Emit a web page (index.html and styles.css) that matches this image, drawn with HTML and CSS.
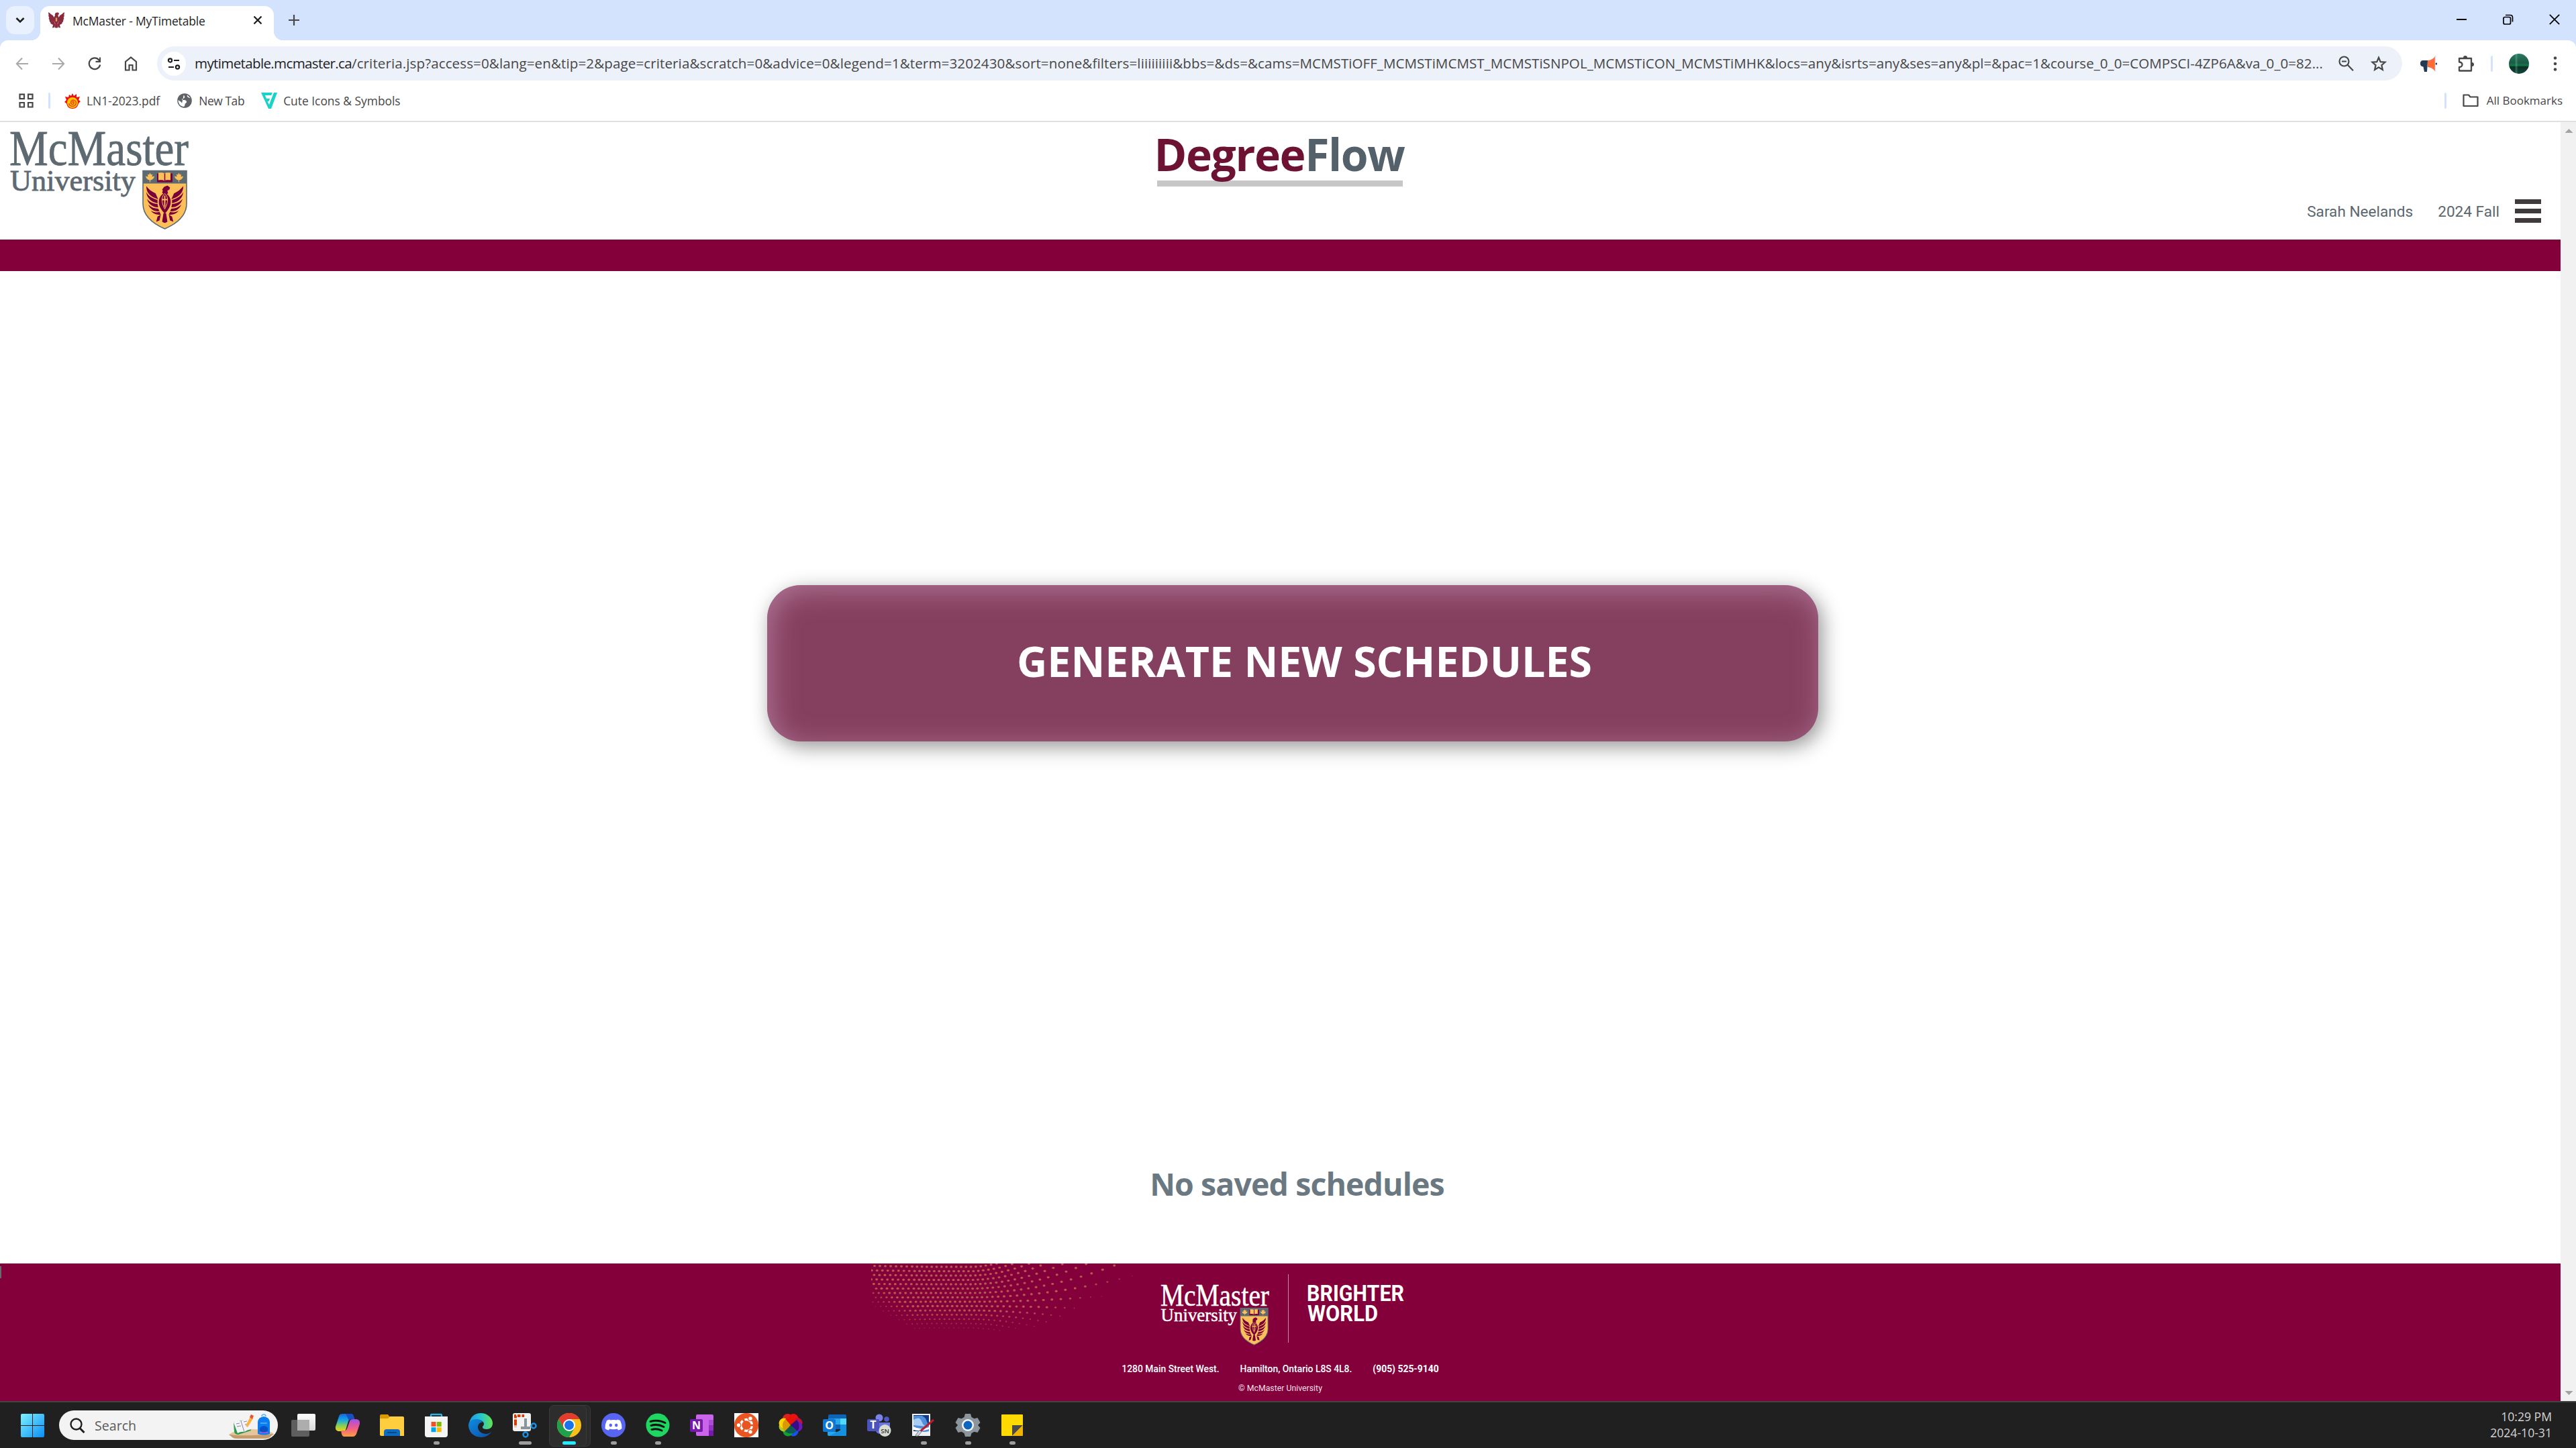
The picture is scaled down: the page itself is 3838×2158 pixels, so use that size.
FILE: index.html
```
<!DOCTYPE html>
<html lang="en">
<head>
<meta charset="utf-8">
<title>McMaster - MyTimetable</title>
<link rel="stylesheet" href="styles.css">
</head>
<body>
<svg class="defs" aria-hidden="true">
  <symbol id="eagle" viewBox="0 0 60 58">
    <path d="M26 7l3-4 5-2 4 3-1 3-3 2 1 4-5 2-4-3 1-3z"/>
    <path d="M30 12c6 3 9 8 9 14 0 7-4 12-9 18-5-6-9-11-9-18 0-6 3-11 9-14z"/>
    <path d="M2 2c4 5 8 8 14 11l4 9-7-3C7 16 2 11 2 2zM2 11c3 6 8 9 17 12l0 5C10 26 3 21 2 11zM3 21c4 5 9 7 16 8l1 5C12 34 5 29 3 21zM5 30c4 4 9 6 15 6l2 4C14 41 8 37 5 30zM9 39c4 3 9 3 13 2l2 4C18 46 12 44 9 39z"/>
    <path d="M58 2c-4 5-8 8-14 11l-4 9 7-3C53 16 58 11 58 2zM58 11c-3 6-8 9-17 12l0 5C50 26 57 21 58 11zM57 21c-4 5-9 7-16 8l-1 5C48 34 55 29 57 21zM55 30c-4 4-9 6-15 6l-2 4C46 41 52 37 55 30zM51 39c-4 3-9 3-13 2l-2 4C42 46 48 44 51 39z"/>
    <path d="M28 43h4l2 13-4 2-4-2zM24 45l-2 9-5 2 2-8zM36 45l2 9 5 2-2-8z"/>
  </symbol>
  <symbol id="shield" viewBox="0 0 67 88">
    <path d="M1 1h65v49c0 17-13 29-32.500 37.500C14 79 1 67 1 50z" fill="#fdbf57" stroke="#5e6a71" stroke-width="1.600"/>
    <path d="M1 1h65v19H1z" fill="#5e6a71"/>
    <path d="M11.500 4l1.500 3 2-1-.5 4 3.500-1-1 3-3 2.500-2 .5v3h-1v-3l-2-.5-3-2.500-1-3 3.500 1L8 6l2 1zM54.500 4l1.500 3 2-1-.5 4 3.500-1-1 3-3 2.500-2 .5v3h-1v-3l-2-.5-3-2.500-1-3 3.500 1L51 6l2 1z" fill="#fdbf57"/>
    <path d="M22 5h23v13H22z" fill="#7a003c"/><path d="M24 4c4-.5 7-.5 9 1 2-1.500 5-1.500 9-1v11c-4-.5-7-.5-9 1-2-1.500-5-1.500-9-1z" fill="#fdbf57"/><path d="M33.500 5v11" stroke="#7a003c" stroke-width="1.500"/>
    <use href="#eagle" x="4" y="22" width="59" height="57" fill="#7a003c"/>
    <path d="M33.500 38v17M29 44h9" stroke="#fdbf57" stroke-width="1.800"/><path d="M33.500 35c5 4 6 12 0 23-6-11-5-19 0-23z" fill="none" stroke="#fdbf57" stroke-width="1"/>
  </symbol>
</svg>

<div class="tabstrip">
  <div class="tab-search"><svg width="14" height="10" viewBox="0 0 14 10"><path d="M1.500 2L7 7.500 12.500 2" fill="none" stroke="#1f1f1f" stroke-width="2.600"/></svg></div>
  <div class="tab">
    <svg class="favicon" viewBox="0 0 60 58" fill="#8a2a3c"><use href="#eagle" stroke="#8a2a3c" stroke-width="3.500"/><path d="M27 20h6v14h-6z" fill="#d9a05a"/></svg>
    <span class="tab-title">McMaster - MyTimetable</span>
    <svg width="14" height="14" viewBox="0 0 14 14"><path d="M1.500 1.500l11 11M12.500 1.500l-11 11" stroke="#1f1f1f" stroke-width="2.300"/></svg>
  </div>
  <svg class="new-tab" width="16" height="16" viewBox="0 0 16 16"><path d="M8 0v16M0 8h16" stroke="#474747" stroke-width="2.200"/></svg>
  <div class="window-controls">
    <svg width="16" height="16" viewBox="0 0 16 16"><path d="M0 8h15" stroke="#000" stroke-width="2"/></svg>
    <svg width="16" height="16" viewBox="0 0 16 16" fill="none" stroke="#000" stroke-width="1.700"><rect x="1" y="4.500" width="10.500" height="10.500" rx="2"/><path d="M4 1.500h7c2 0 3.500 1.500 3.500 3.500v6.500"/></svg>
    <svg width="16" height="16" viewBox="0 0 16 16"><path d="M.8.8l14.400 14.400M15.200.8L.8 15.200" stroke="#000" stroke-width="1.700"/></svg>
  </div>
</div>

<div class="toolbar">
  <div class="nav"><svg width="20" height="20" viewBox="0 0 20 20"><path d="M19 10H2M10 1.500L1.800 10l8.200 8.500" fill="none" stroke="#a9a9a9" stroke-width="2"/></svg></div>
  <div class="nav"><svg width="20" height="20" viewBox="0 0 20 20"><path d="M1 10h17M10 1.500l8.200 8.500-8.200 8.500" fill="none" stroke="#a9a9a9" stroke-width="2"/></svg></div>
  <div class="nav"><svg width="20" height="20" viewBox="0 0 20 20"><path d="M18.200 11.500A8.300 8.300 0 1 1 16.500 4.500L18 6.500" fill="none" stroke="#474747" stroke-width="2.200"/><path d="M19 .5v7.500h-7.500V5.800H17V.5z" fill="#474747"/></svg></div>
  <div class="nav"><svg width="20" height="22" viewBox="0 0 20 22"><path d="M2 20.500V8l8-6.500L18 8v12.500h-5.500V13h-5v7.500z" fill="none" stroke="#474747" stroke-width="2.200"/></svg></div>
  <div class="omnibox">
    <span class="site-chip"><svg width="20" height="18" viewBox="0 0 20 18" fill="none" stroke="#1f1f1f" stroke-width="2.200"><circle cx="4.500" cy="4" r="2.600"/><path d="M10 4h8M2 14h8"/><circle cx="15.500" cy="14" r="2.600"/></svg></span>
    <span class="url"><span class="host">mytimetable.mcmaster.ca</span><span class="path">/criteria.jsp?access=0&amp;lang=en&amp;tip=2&amp;page=criteria&amp;scratch=0&amp;advice=0&amp;legend=1&amp;term=3202430&amp;sort=none&amp;filters=liiiiiiiii&amp;bbs=&amp;ds=&amp;cams=</span><span class="query">MCMSTiOFF_MCMSTiMCMST_MCMSTiSNPOL_MCMSTiCON_MCMSTiMHK&amp;locs=any&amp;isrts=any&amp;ses=any&amp;pl=&amp;pac=1&amp;course_0_0=COMPSCI-4ZP6A&amp;va_0_0=82...</span></span>
    <svg width="26" height="26" viewBox="0 0 26 26" fill="none" stroke="#474747" stroke-width="2.200"><circle cx="9.500" cy="9.500" r="7"/><path d="M6 9.500h7M14.800 14.800l8.200 8.500"/></svg>
    <svg width="28" height="28" viewBox="0 0 28 28"><path d="M14 4.800l2.700 6.300 6.800.6-5.100 4.500 1.500 6.700-5.900-3.500-5.900 3.500 1.500-6.700-5.100-4.500 6.800-.6z" fill="none" stroke="#474747" stroke-width="2.200"/></svg>
  </div>
  <div class="ext"><svg width="26" height="26" viewBox="0 0 26 26"><path d="M12 8H6C2 8 1 10 1 13s2 4 4.500 4.500L7 25h4l.5-7z" fill="#243b56"/><path d="M12 8c4 0 8-2 11-6v22c-3-4-7-6-11-6z" fill="#ff6b35"/><path d="M23.500 1v24" stroke="#cfe6fb" stroke-width="1.500"/><circle cx="25" cy="13" r="1.500" fill="#243b56"/></svg></div>
  <div class="ext"><svg width="26" height="26" viewBox="0 0 26 26"><path d="M3 5h18v18.500H3v-5.500c6 0 6-7.500 0-7.500z" fill="none" stroke="#474747" stroke-width="2.300" stroke-linejoin="round"/><path d="M9 4a3 3 0 0 1 6 0zM22 11a3 3 0 0 1 0 6z" fill="#474747"/></svg></div>
  <i class="bar-divider toolbar-divider"></i>
  <i class="avatar"></i>
  <div class="kebab"><svg width="6" height="22" viewBox="0 0 6 22" fill="#474747"><circle cx="3" cy="2.500" r="2.300"/><circle cx="3" cy="11" r="2.300"/><circle cx="3" cy="19.500" r="2.300"/></svg></div>
</div>

<div class="bookmarks">
  <svg width="24" height="24" viewBox="0 0 24 24" fill="none" stroke="#474747" stroke-width="2.200"><path d="M2.500 2.600h6.500v6.500H2.500zM15 2.600h6.500v6.500H15zM2.500 15H9v6.500H2.500zM15 15h6.500v6.500H15z"/></svg>
  <i class="bar-divider"></i>
  <span class="bookmark"><svg width="24" height="24" viewBox="0 0 24 24"><path d="M12 1l2 4 4-3v5l5-1-2 5 3 2-3 3c-1 5-4 8-9 8s-8-3-9-8l-3-2 3-3-2-5 5 1 1-4 3 2z" fill="#f00d0d"/><circle cx="12" cy="15" r="8" fill="#ffc800"/><path d="M12 15c-1-2 3-2 2 1s-6 1-4-3 9-1 7 4-10 4-10-1" fill="none" stroke="#f2480d" stroke-width="1.600"/></svg>LN1-2023.pdf</span>
  <span class="bookmark tight"><svg width="24" height="24" viewBox="0 0 24 24"><circle cx="12" cy="12" r="10.800" fill="#5f6368"/><path d="M11 2.500c-1 2 2 2.500 1 5-1 2-4 1-4 3.500 3 0 7-.5 7 3 0 2-2.500 1.500-2.500 4 0 1-1 3-2 3C5 20 2.500 16 2.500 11 5 13 8 14 8 16M16 3.500c-1 3 2 4 5 5" fill="#fff"/></svg>New Tab</span>
  <span class="bookmark"><svg width="24" height="24" viewBox="0 0 24 24" fill="#17d3c8"><path d="M0 0h17l-2 4H6l2 5h5l-1.500 4H9.500L12 18l7-18h5l-9 24h-4z"/></svg>Cute Icons &amp; Symbols</span>
  <span class="bookmark-right"><i class="bar-divider"></i><svg width="24" height="20" viewBox="0 0 24 20"><path d="M1.500 1.500h7.500l2.500 3h11v13.500h-21z" fill="none" stroke="#474747" stroke-width="2.200" stroke-linejoin="round"/></svg><span>All Bookmarks</span></span>
</div>

<div class="viewport">
  <div class="page">
    <header class="site-header">
      <svg class="logo site-logo" viewBox="0 0 267 148">
        <text x="0" y="51" font-size="75" textLength="267" lengthAdjust="spacingAndGlyphs">McMaster</text>
        <text x="1" y="89" font-size="45" textLength="187" lengthAdjust="spacingAndGlyphs">University</text>
        <use href="#shield" x="198" y="58" width="67" height="89"/>
      </svg>
      <h1 class="product"><span class="degree">Degree</span><span class="flow">Flow</span></h1>
      <nav class="account"><span>Sarah Neelands</span><span>2024 Fall</span><i class="burger"></i></nav>
    </header>
    <div class="band"></div>
    <main class="content">
      <button class="generate">GENERATE NEW SCHEDULES</button>
      <p class="empty">No saved schedules</p>
    </main>
    <footer class="site-footer">
      <svg class="dots" id="dots" viewBox="0 0 400 110"></svg>
      <i class="edge-mark"></i>
      <div class="footer-brand">
        <svg class="logo footer-logo" viewBox="0 0 267 148">
          <text x="0" y="51" font-size="75" textLength="267" lengthAdjust="spacingAndGlyphs">McMaster</text>
          <text x="1" y="89" font-size="45" textLength="187" lengthAdjust="spacingAndGlyphs">University</text>
          <use href="#shield" x="195" y="55" width="70" height="93"/>
        </svg>
        <i class="footer-rule"></i>
        <svg class="brighter" viewBox="0 0 144 56"><g font-family="Roboto, sans-serif" font-weight="700" font-size="32.500" fill="#fff"><text x="-1" y="24.500" textLength="145" lengthAdjust="spacingAndGlyphs">BRIGHTER</text><text x="0" y="54.500" textLength="105" lengthAdjust="spacingAndGlyphs">WORLD</text></g></svg>
      </div>
      <div class="address"><span>1280 Main Street West.</span><span>Hamilton, Ontario L8S 4L8.</span><b>(905) 525-9140</b></div>
      <div class="copyright">© McMaster University</div>
    </footer>
  </div>
  <div class="scrollbar"><i class="arrow up"></i><i class="arrow down"></i></div>
</div>

<div class="taskbar">
  <svg class="start" width="35" height="35" viewBox="0 0 35 35"><defs><linearGradient id="win" x2="1" y2="1"><stop stop-color="#7ff2ff"/><stop offset="1" stop-color="#0a8df5"/></linearGradient></defs><path d="M2 0h15v17H0V2q0-2 2-2zM18 0h15q2 0 2 2v15H18zM0 18h17v17H2q-2 0-2-2zM18 18h17v15q0 2-2 2H18z" fill="url(#win)"/></svg>
  <div class="search">
    <svg width="23" height="23" viewBox="0 0 23 23"><circle cx="9.500" cy="9.500" r="8" fill="none" stroke="#1f1f1f" stroke-width="2.400"/><path d="M15 15.500l6.500 6.500" stroke="#1f1f1f" stroke-width="3"/></svg>
    <span>Search</span>
    <svg class="school" width="70" height="44" viewBox="0 0 70 44"><path d="M1 36q12-9 36-8 22 0 31 7l-5 4q-2 3-10 3H14q-7 0-9-3z" fill="#e6c49c"/><path d="M1 36q20 3 67-1l-5 4q-2 3-10 3H14q-7 0-9-3z" fill="#c49b6c"/><path d="M8 18l20-5 6 17-19 6q-5 0-6-4z" fill="#2e9b4d"/><path d="M8 18q5-3 11-2 4-3 9-4l6 16q-6 1-10 4-5-1-10 2z" fill="#f5f3fa"/><path d="M19 16l5 16M12 20l5-1M13 24l6-1M23 17l5-1M25 21l5-1" stroke="#8a8796"/><path d="M26 23l7-14 4 3-8 13z" fill="#fbb13c"/><path d="M32 10l2-4 4 2-2 5z" fill="#e8503a"/><path d="M44 35V17q1-7 9-8 8 1 9 8v18q-9 3-18 0z" fill="#0b7dee"/><path d="M47 33v-7q6-6 12 0v7q-6 2-12 0z" fill="#0553c7"/><path d="M47 31q6 3 12 0v3H47z" fill="#a05ad9"/><path d="M50 9q0-3 3-3t3 3M48 19h10" fill="none" stroke="#55b7ff" stroke-width="1.500"/></svg>
  </div>
  <div class="apps">
    <div class="app"><svg viewBox="0 0 36 36"><defs><linearGradient id="tv" x2="0" y2="1"><stop stop-color="#fff"/><stop offset="1" stop-color="#d9d9d9"/></linearGradient></defs><rect x="9" y="1" width="27" height="25" rx="2" fill="url(#tv)"/><rect x="0" y="10" width="27" height="25" rx="2" fill="#6a6a6a" opacity=".85"/><rect x="9" y="10" width="18" height="16" fill="#adadad"/></svg></div>
    <div class="app"><svg viewBox="0 0 36 36"><defs><linearGradient id="c1" x2="0" y2="1"><stop stop-color="#1b63d8"/><stop offset=".35" stop-color="#13a6e8"/><stop offset=".7" stop-color="#8bd052"/><stop offset="1" stop-color="#f5d315"/></linearGradient><linearGradient id="c2" x2="0" y2="1"><stop stop-color="#a34ee8"/><stop offset=".5" stop-color="#ef5b8c"/><stop offset="1" stop-color="#ff9d3c"/></linearGradient></defs><path d="M10 1h13q3 0 4 4l1 4h-5q-3 0-4 3l-4 13q-1 2-4 2H4q-5-1-4-7L5 5q1-4 5-4z" fill="url(#c1)"/><path d="M26 9h5q6 1 5 7l-5 15q-2 4-5 4H13q-3 0-4-4l-1-5h5q3 0 4-3l4-11q1-3 5-3z" fill="url(#c2)"/><path d="M15 1h8q3 0 4 4l1 4h-5q-2 0-3 2z" fill="#164fc4"/></svg></div>
    <div class="app"><svg viewBox="0 0 36 36"><path d="M0 4q0-2 2-2h10l3 4v5H0z" fill="#dd9a00"/><path d="M0 8h12l3-3h19q2 0 2 2v27H2q-2 0-2-2z" fill="#ffce3e"/><path d="M6 34V28q0-4 4-4h16q4 0 4 4v6z" fill="#0f6bbf"/><path d="M11 29h14" stroke="#074887" stroke-width="2"/></svg></div>
    <div class="app dot"><svg viewBox="0 0 36 36"><path d="M10 7V3q0-1 1-1h14q1 0 1 1v4" fill="none" stroke="#29b1ea" stroke-width="2.400"/><path d="M1 5h34v27q0 4-4 4H5q-4 0-4-4z" fill="#f4f4f4"/><path d="M10.500 13h7v7h-7z" fill="#f25022"/><path d="M18.700 13h7v7h-7z" fill="#7fba00"/><path d="M10.500 21.200h7v7h-7z" fill="#00a4ef"/><path d="M18.700 21.200h7v7h-7z" fill="#ffb900"/></svg></div>
    <div class="app"><svg viewBox="0 0 36 36"><defs><linearGradient id="e1" x2="1"><stop stop-color="#1c9be8"/><stop offset=".5" stop-color="#27c3cf"/><stop offset="1" stop-color="#66e34f"/></linearGradient><linearGradient id="e2" x2="1" y2="1"><stop stop-color="#0f8ce0"/><stop offset="1" stop-color="#0b4fa5"/></linearGradient></defs><path d="M1 15C3 5 10 0 18 0c11 0 18 8 18 15 0 6-4 9-9 9-4 0-6-1-6-3s2-2 2-5-4-6-9-6C8 10 3 12 1 15z" fill="url(#e1)"/><path d="M0 18c0-6 6-9 12-9 4 0 8 2 9 5-3-1-7 2-7 7 0 6 6 10 12 10 3 0 5-1 8-3-3 5-9 8-15 8C7 36 0 27 0 18z" fill="url(#e2)"/></svg></div>
    <div class="app wide"><svg viewBox="0 0 36 36"><rect x="0" y="0" width="27" height="27" rx="3" fill="#f2f2f2"/><path d="M4 14V4h13M4 14v7" fill="none" stroke="#d83b01" stroke-width="4" stroke-dasharray="4.500 2"/><path d="M19 8v16M12 22h14" stroke="#8b949b" stroke-width="4"/><circle cx="31" cy="19" r="3.500" fill="none" stroke="#1a8fe3" stroke-width="2.500"/><circle cx="19" cy="32" r="3.500" fill="none" stroke="#1a8fe3" stroke-width="2.500"/></svg></div>
    <div class="app active"><svg viewBox="0 0 36 36"><circle cx="18" cy="18" r="18" fill="#fbc116"/><path d="M18 9H33.600A18 18 0 0 0 2.400 9l7.800 13.500z" fill="#e33b2e"/><path d="M10.200 22.500L2.400 9A18 18 0 0 0 18 36l7.800-13.500z" fill="#1fa04b"/><circle cx="18" cy="18" r="9" fill="#fff"/><circle cx="18" cy="18" r="7" fill="#1a73e8"/></svg></div>
    <div class="app dot"><svg viewBox="0 0 36 36"><circle cx="18" cy="18" r="18" fill="#5865f2"/><path d="M13 10.500q5-1 10 0l1-1q2 .5 4 1.500 3 6 2.500 12-2.500 2-5.500 2.500l-1.200-2q-5.800 1.500-11.600 0l-1.200 2Q8 25 5.500 23 5 17 8 11q2-1 4-1.500z" fill="#fff"/><ellipse cx="13.800" cy="18" rx="2.200" ry="2.500" fill="#5865f2"/><ellipse cx="22.200" cy="18" rx="2.200" ry="2.500" fill="#5865f2"/></svg></div>
    <div class="app dot"><svg viewBox="0 0 36 36"><circle cx="18" cy="18" r="17.500" fill="#1ed760"/><path d="M7 12.500q12-3.500 22 2M8 18.500q10-3 19 2M9 24.500q8-2 15 1.500" fill="none" stroke="#121212" stroke-width="3" stroke-linecap="round"/></svg></div>
    <div class="app"><svg viewBox="0 0 36 36"><rect x="9" y="2" width="26" height="32" rx="2" fill="#ca64ea"/><path d="M28 10h7v8h-7z" fill="#ae4bd5"/><path d="M28 18h7v8h-7z" fill="#9332bf"/><path d="M28 26h7v6q0 2-2 2h-5z" fill="#7719aa"/><rect x="0" y="9" width="19" height="19" rx="2" fill="#7719aa"/><text x="9.500" y="23.500" text-anchor="middle" class="tile-letter">N</text></svg></div>
    <div class="app"><svg viewBox="0 0 36 36"><path d="M0 0h36v36H0z" fill="#fff"/><circle cx="18" cy="18" r="18" fill="#e95420"/><circle cx="18" cy="18" r="8.500" fill="none" stroke="#fff" stroke-width="3.500" stroke-dasharray="14.800 3" stroke-dashoffset="-1.500"/><g fill="#fff" stroke="#e95420" stroke-width="1.200"><circle cx="6.500" cy="18" r="3.300"/><circle cx="24" cy="8" r="3.300"/><circle cx="24" cy="28" r="3.300"/></g></svg></div>
    <div class="app"><svg viewBox="0 0 36 36"><circle cx="13.500" cy="8.500" r="7.500" fill="#e02020"/><circle cx="22" cy="8.500" r="7.500" fill="#f01010"/><circle cx="28" cy="14.500" r="7.500" fill="#c01040"/><circle cx="28" cy="20" r="7.500" fill="#6a1ac0"/><circle cx="22" cy="27" r="7.500" fill="#1a50f0"/><circle cx="14" cy="27" r="7.500" fill="#12a030"/><circle cx="8" cy="20" r="7.500" fill="#a8d020"/><circle cx="8" cy="15" r="7.500" fill="#ffd500"/><path d="M18 18L10 9q7-6 16 0z" fill="#e81505"/><path d="M18 18l9-8q7 8 1 17z" fill="#3b0c80"/><path d="M18 18l9 9q-9 7-18 0z" fill="#0a5c50"/><path d="M18 18L9 27Q2 18 10 9z" fill="#d89a00"/></svg></div>
    <div class="app"><svg viewBox="0 0 36 36"><rect x="8" y="2" width="27" height="22" rx="2" fill="#0f63b4"/><path d="M8 8h9v9H8zM26 17h9v9h-9z" fill="#1490df"/><path d="M17 8h9v9h-9z" fill="#28a8ea"/><path d="M26 8h9v9h-9z" fill="#50d9ff"/><path d="M7 21l14 8 14-8v11q0 2-2 2H9q-2 0-2-2z" fill="#28a8ea"/><path d="M35 21v11q0 2-2 2H9z" fill="#1490df"/><rect x="0" y="9" width="19" height="19" rx="2" fill="#0f78d4"/><text x="9.500" y="23.500" text-anchor="middle" class="tile-letter">O</text></svg></div>
    <div class="app"><svg viewBox="0 0 36 36"><circle cx="18" cy="7" r="5.500" fill="#7b83eb"/><circle cx="29" cy="9" r="3.800" fill="#5059c9"/><path d="M12 14h22v9q0 8-9 8-13 2-13-9z" fill="#6b73dd"/><rect x="0" y="9" width="18" height="18" rx="2" fill="#4b53bc"/><text x="9" y="23" text-anchor="middle" class="tile-letter">T</text><circle cx="26.500" cy="26" r="9" fill="#d9dcd0"/><text x="26.500" y="29.500" text-anchor="middle" class="badge-letter">SN</text></svg></div>
    <div class="app dot shift"><svg viewBox="0 0 36 36"><rect x="1" y="1" width="27" height="33" fill="#eef0f5"/><path d="M3 3h23v24H3z" fill="#123a86"/><path d="M3 4h13q6 3 7 9l3 5v9q-12 3-23-4z" fill="#4f8fdc"/><path d="M3 10q9-6 12 2t9 8l-21-2z" fill="#a9cdf5"/><path d="M3 20q10 6 23 1v3q-12 4-23 1z" fill="#fff"/><path d="M33 10L12 28" stroke="#b91f2b" stroke-width="3"/><path d="M12 25l3 3-5 6q-4 1-4-1z" fill="#c9d3da" stroke="#667" stroke-width=".8"/></svg></div>
    <div class="app dot"><svg viewBox="0 0 36 36"><path d="M14 1h8l1.500 5 4 2.200 5-1.200 4 7-3.500 4 3.500 4-4 7-5-1.200-4 2.200L22 35h-8l-1.500-5-4-2.200-5 1.200-4-7L3 18l-3.500-4 4-7 5 1.200 4-2.200z" fill="#8c959c"/><circle cx="18" cy="18" r="9" fill="#f4f6f7"/><circle cx="18" cy="18" r="6.500" fill="#0f67bd"/></svg></div>
    <div class="app dot"><svg viewBox="0 0 36 36"><path d="M2 3q0-1 1-1h30q1 0 1 1v16L20 34H3q-1 0-1-1z" fill="#ffd900"/><path d="M18 18h16L18 34z" fill="#4a4a4a"/><path d="M34 18v15q0 1-1 1H18z" fill="#f0b400"/></svg></div>
  </div>
  <div class="clock"><span>10:29 PM</span><span>2024-10-31</span></div>
</div>
<script src="dots.js"></script>
</body>
</html>
```
FILE: styles.css
```
* { box-sizing: border-box; }
body {
  margin: 0; width: 3838px; height: 2158px; overflow: hidden;
  display: flex; flex-direction: column;
  background: #fff; color: #1f1f1f;
  font-family: "Open Sans", "Noto Sans", sans-serif;
}
svg { display: block; flex: none; }
i { display: block; flex: none; }
.defs { position: absolute; width: 0; height: 0; }

/* browser tab strip */
.tabstrip { height: 72px; margin-bottom: -12px; flex: none; background: #d3e3fd; display: flex; align-items: flex-start; padding-left: 9px; }
.tab-search { width: 42px; height: 42px; margin-top: 9px; border-radius: 13px; background: #e9f1fe; display: flex; align-items: center; justify-content: center; }
.tab { position: relative; width: 348px; height: 51px; margin: 9px 0 0 9px; padding: 0 17px 9px 12px; border-radius: 14px 14px 0 0; background: #fff; display: flex; align-items: center; }
.tab::before, .tab::after { content: ""; position: absolute; bottom: 0; width: 14px; height: 14px; }
.tab::before { left: -14px; background: radial-gradient(circle at 0 0, transparent 14px, #fff 14.500px); }
.tab::after { right: -14px; background: radial-gradient(circle at 100% 0, transparent 14px, #fff 14.500px); }
.favicon { width: 24px; height: 24px; }
.tab-title { flex: 1; padding: 2px 0 0 12px; font-size: 17.500px; letter-spacing: -.17px; line-height: 24px; white-space: nowrap; }
.new-tab { margin: 22px 0 0 22px; }
.window-controls { margin: 21px 24px 0 auto; display: flex; gap: 53px; }

/* address row */
.toolbar { position: relative; height: 60px; flex: none; background: #fff; border-radius: 12px 12px 0 0; display: flex; align-items: flex-start; padding: 9px 0 0 6px; }
.toolbar > * { height: 51px; }
.nav { width: 54px; display: flex; align-items: center; justify-content: center; }
.omnibox { width: 3345px; margin-left: 12px; padding: 0 21px 0 7px; border-radius: 26px; background: #ecf1fa; display: flex; align-items: center; gap: 21px; }
.site-chip { width: 36px; height: 36px; border-radius: 50%; background: #fff; display: flex; align-items: center; justify-content: center; flex: none; }
.url { flex: 1; margin: -2px 0 0 -8px; font-size: 20.600px; line-height: 30px; white-space: nowrap; color: #474747; }
.host { color: #1f1f1f; letter-spacing: -.67px; }
.path { letter-spacing: .09px; }
.query { letter-spacing: .02px; }
.ext { width: 56px; display: flex; align-items: center; justify-content: center; }
.omnibox + .ext { margin-left: 11px; }
.bar-divider { width: 3px; height: 24px; border-radius: 2px; background: #d3e3fd; }
.toolbar .toolbar-divider { height: 24px; margin: 14px 0 0 9px; }
.toolbar .avatar { width: 30px; height: 30px; margin: 11px 0 0 24px; border-radius: 50%; background: linear-gradient(90deg, transparent 30%, rgba(120,220,180,.35) 36%, transparent 46%), linear-gradient(#2c7a63 0, #1c5a45 45%, #0f7a45 58%, #0b3026 66%, #16463a 100%); }
.kebab { width: 30px; margin-left: 24px; display: flex; align-items: center; justify-content: center; }

/* bookmarks row */
.bookmarks { height: 62px; flex: none; border-bottom: 2px solid #e0e0e0; display: flex; align-items: center; padding: 0 20px 0 27px; font-size: 17.400px; line-height: 24px; color: #474747; white-space: nowrap; }
.bookmarks > .bar-divider { margin: 0 21px; }
.bookmark { display: flex; align-items: center; gap: 9px; margin-right: 25px; }
.tight { letter-spacing: -.4px; }
.bookmark-right { margin-left: auto; display: flex; align-items: center; font-size: 17px; }
.bookmark-right svg { margin: 0 12px 0 24px; }

/* page */
.viewport { height: 1906px; flex: none; display: flex; }
.page { width: 3815px; display: flex; flex-direction: column; }
.site-header { height: 175px; display: grid; grid-template-columns: 1fr auto 1fr; }
.logo { overflow: visible; font-family: "Liberation Serif", serif; fill: currentColor; }
.logo text { stroke: currentColor; stroke-width: .8px; }
.site-logo { width: 267px; height: 148px; margin: 13px 0 0 14px; color: #5e6a71; }
.product { position: relative; width: 366px; height: 96px; margin: 0 1px 0 -1px; border-bottom: 9px solid #c8c7c6; font-size: 66px; line-height: 94px; letter-spacing: -1.400px; white-space: nowrap; }
.degree { color: #6e1233; margin-left: -4px; }
.flow { color: #54616a; }
.account { display: flex; justify-content: flex-end; align-items: flex-start; padding: 119px 29px 0 0; font: 22.600px/30px Roboto, sans-serif; color: #5b676f; }
.account span { margin-right: 37px; }
.account span + span { margin-right: 23px; }
.burger { width: 39px; height: 35px; margin-top: -4px; background: linear-gradient(#3f3a3b 7px, transparent 7px 14px, #3f3a3b 14px 21px, transparent 21px 28px, #3f3a3b 28px); }
.band { height: 47px; background: #84003a; border-top: 1px solid #6b1133; }
.content { height: 1479px; padding: 468px 0 0 37px; display: flex; flex-direction: column; align-items: center; }
.generate { width: 1566px; height: 233px; padding: 0 0 8px 35px; border: 0; border-radius: 50px; background: #86405f; color: #fff; font: 700 62.600px/90px "Open Sans", "Noto Sans", sans-serif; box-shadow: inset 6px 8px 40px rgba(200,150,185,.6), 6px 8px 30px rgba(0,0,0,.42); }
.empty { margin: 629px 0 0; padding-left: 13px; font-size: 46.500px; line-height: 60px; font-weight: 700; letter-spacing: -.92px; color: #6a7981; }

.site-footer { position: relative; height: 205px; padding-top: 16px; background: #84003a; color: #fff; display: flex; flex-direction: column; align-items: center; font-family: Roboto, sans-serif; }
.dots { position: absolute; left: 1298px; top: 0; width: 400px; height: 110px; }
.edge-mark { position: absolute; left: 0; top: 4px; width: 2px; height: 18px; background: #6a6a6a; }
.footer-brand { display: flex; align-items: flex-start; height: 106px; padding-left: 5px; }
.footer-logo { width: 162px; height: 90px; margin-top: 16px; color: #fff; }
.footer-rule { width: 1px; height: 102px; margin: 0 28px; background: #c58aa3; }
.brighter { width: 144px; height: 56px; margin-top: 15px; overflow: visible; }
.address { display: flex; gap: 31px; margin-top: 25px; font-size: 13.900px; line-height: 20px; font-weight: 500; }
.address b { font-weight: 700; }
.copyright { margin-top: 9px; font-size: 12.300px; line-height: 20px; color: #efdfe6; }

.scrollbar { width: 23px; background: #f1f1f1; display: flex; flex-direction: column; justify-content: space-between; align-items: center; padding: 10px 0 9px 2px; }
.arrow { width: 12px; height: 6px; background: #a3a3a3; }
.up { clip-path: polygon(50% 0, 100% 100%, 0 100%); }
.down { clip-path: polygon(0 0, 100% 0, 50% 100%); }

/* taskbar */
.taskbar { height: 70px; flex: none; border-top: 2px solid #444543; background: #202020; display: flex; align-items: center; padding: 0 36px 0 31px; }
.search { width: 326px; height: 44px; margin: 0 20px 0 22px; padding-left: 16px; border-radius: 22px; background: #f3f3f3; display: flex; align-items: center; color: #5b5b5b; font-size: 19.600px; overflow: hidden; }
.search span { margin-left: 14px; }
.school { margin: 0 4px 0 auto; }
.apps { display: flex; gap: 30px; }
.app { position: relative; width: 36px; height: 68px; display: flex; align-items: center; }
.app svg { position: relative; width: 36px; height: 36px; overflow: visible; }
.dot::after, .wide::after, .active::after { content: ""; position: absolute; top: 58px; left: 14px; width: 9px; height: 5px; border-radius: 3px; background: #9d9d9d; }
.wide::after { left: 9px; width: 19px; }
.active::after { left: 8px; width: 20px; background: #26e9ff; }
.active::before { content: ""; position: absolute; left: -12px; top: 4px; width: 54px; height: 60px; border-radius: 7px; background: #2d2d2d; border: 1px solid #3a3a3a; box-shadow: 6px 0 0 -1px #2b2b2b, 6px 0 0 0 #393939; }
.tile-letter { font: 700 16px "Open Sans", sans-serif; fill: #fff; }
.badge-letter { font: 600 9.500px "Open Sans", sans-serif; fill: #333; }
.clock { margin: -2px 0 0 auto; display: flex; flex-direction: column; align-items: flex-end; font-size: 17.600px; line-height: 24px; color: #d4d4d4; }
```
FILE: dots.js
```
// Halftone wave in the footer: rows of dots that flatten downwards and lift to the right.
const svg = document.getElementById('dots');
const edge = [[0, 62], [60, 98], [192, 102], [260, 95], [285, 84], [325, 60], [367, 38], [395, 14]];
const limit = x => {
  for (let i = 1; i < edge.length; i++) {
    const [x0, y0] = edge[i - 1], [x1, y1] = edge[i];
    if (x <= x1) return y0 + (y1 - y0) * (x - x0) / (x1 - x0);
  }
  return 0;
};
let out = '';
for (let r = 0; r < 40; r++) {
  const base = -60 + r * 6.5;
  let x = (r * 3.7) % 8;
  while (x < 392) {
    const t = Math.max(0, (x - 145) / 208);
    const q = -42 + (base - 42) * 2.2;
    const y = base + q * t * t + (x < 90 ? (90 - x) * (45 - base) * -0.0004 : 0);
    const lim = limit(x);
    if (y > -1 && y < lim) {
      const fade = Math.min(1, (lim - y) / 32);
      const s = 0.8 + 1.2 * fade;
      out += `<ellipse cx="${x.toFixed(1)}" cy="${y.toFixed(1)}" rx="${s.toFixed(2)}" ry="${(s * 0.85).toFixed(2)}" fill="#b55a50" opacity="${(0.4 + 0.6 * fade).toFixed(2)}"/>`;
    }
    x += x < 60 ? 8 : x < 160 ? 7.3 : 7.3 + (x - 160) * 0.055;
  }
}
svg.innerHTML = out;
```
